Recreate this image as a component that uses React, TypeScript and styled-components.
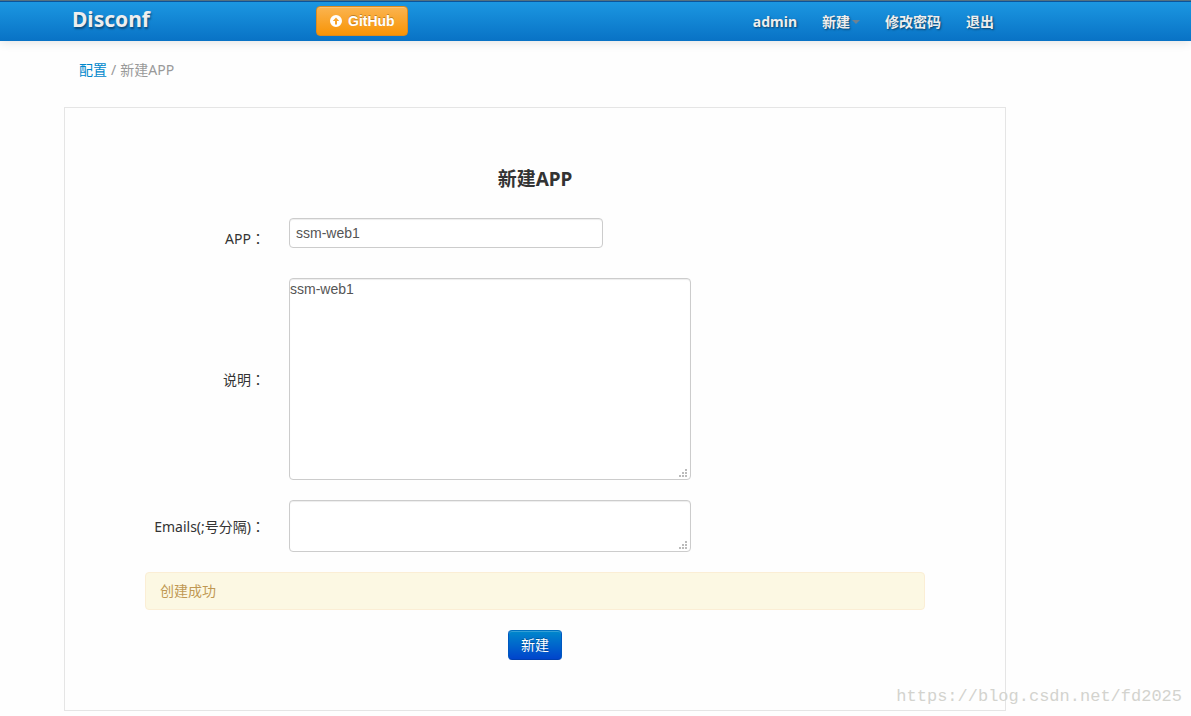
import React from "react";
import styled, { createGlobalStyle, css } from "styled-components";

const GlobalStyle = createGlobalStyle`
  *, *::before, *::after { box-sizing: border-box; }
  body {
    margin: 0;
    background: #fefefe;
    color: #333;
    font-family: "Noto Sans", "Noto Sans CJK SC", sans-serif;
    font-size: 14px;
    line-height: 20px;
  }
`;

const Page = styled.div`
  position: relative;
`;

const Navbar = styled.header`
  padding: 0 64px;
  border-top: 1px solid #56707f;
  background: linear-gradient(#1c98e2, #0872c5);
  box-shadow: inset 0 1px 0 #0b549b, 0 1px 10px rgba(0, 0, 0, 0.12);
`;

const NavInner = styled.div`
  display: flex;
  align-items: center;
  max-width: 942px;
  height: 40px;
  padding: 0 12px 0 8px;
`;

const BrandSlot = styled.div`
  flex: 0 0 244px;
  padding-bottom: 2px;
`;

const Brand = styled.a`
  color: #eee;
  font-size: 21px;
  font-weight: 700;
  text-decoration: none;
  text-shadow: 1px 2px 2px rgba(0, 0, 0, 0.4);
`;

const buttonBase = css`
  display: inline-flex;
  align-items: center;
  height: 30px;
  padding: 0 12px;
  border-radius: 4px;
  color: #fff;
  font-size: 14px;
  line-height: 20px;
  cursor: pointer;
`;

const GithubButton = styled.button`
  ${buttonBase}
  gap: 5px;
  border: 1px solid #dd8a1c;
  background: linear-gradient(#fbb450, #f89406);
  box-shadow: inset 0 1px 0 rgba(255, 255, 255, 0.2);
  font-family: "Liberation Sans", Arial, sans-serif;
  font-weight: 700;
  text-shadow: 0 -1px 0 rgba(0, 0, 0, 0.25);
`;

const SubmitButton = styled.button`
  ${buttonBase}
  border: 1px solid #0058b8;
  border-color: #0070c0 #0058c0 #003fb0;
  background: linear-gradient(#0088cc, #0044cc);
  box-shadow: inset 0 1px 0 rgba(255, 255, 255, 0.2);
  font-family: inherit;
  text-shadow: 0 -1px 0 rgba(0, 0, 0, 0.25);
`;

const NavMenu = styled.nav`
  display: flex;
  gap: 25px;
  margin-left: auto;
  padding-top: 2px;
`;

const NavLink = styled.a`
  display: flex;
  align-items: center;
  gap: 2px;
  color: #eee;
  font-weight: 700;
  text-decoration: none;
  white-space: nowrap;
  text-shadow: 1px 1px 2px rgba(0, 0, 0, 0.5);
`;

const Caret = styled.span`
  border: 4px solid transparent;
  border-top-color: #6f8291;
  border-bottom: 0;
`;

const Main = styled.main`
  padding: 0 64px;
`;

const Breadcrumb = styled.nav`
  display: flex;
  gap: 4px;
  padding: 19px 15px 27px;
  color: #999;

  a {
    color: #0088cc;
    text-decoration: none;
  }
`;

const Panel = styled.section`
  max-width: 942px;
  padding: 60px 80px 50px;
  border: 1px solid #e5e5e5;
`;

const Title = styled.h1`
  margin: 0 0 28px;
  font-size: 19px;
  line-height: 22px;
  text-align: center;
`;

const Form = styled.form`
  display: flex;
  flex-direction: column;
  gap: 20px;
`;

const Row = styled.div`
  display: grid;
  grid-template-columns: 120px minmax(0, 402px);
  align-items: center;
  column-gap: 24px;
`;

const Label = styled.label`
  text-align: right;
  white-space: nowrap;
`;

const Colon = styled.span`
  font-family: "Noto Sans CJK TC", sans-serif;
`;

const fieldBase = css`
  display: block;
  border: 1px solid #ccc;
  border-radius: 4px;
  outline: 0;
  background: #fff;
  box-shadow: inset 0 1px 1px rgba(0, 0, 0, 0.075);
  color: #555;
  font-family: "Liberation Sans", Arial, sans-serif;
  font-size: 14px;
  line-height: 20px;
`;

const TextInput = styled.input`
  ${fieldBase}
  width: 100%;
  max-width: 314px;
  height: 30px;
  margin-bottom: 10px;
  padding: 4px 6px;
`;

const TextArea = styled.textarea<{ $rows: "tall" | "short" }>`
  ${fieldBase}
  width: 100%;
  height: ${(p) => (p.$rows === "tall" ? 202 : 52)}px;
  padding: 0;
  resize: both;

  &::-webkit-resizer {
    background-image:
      linear-gradient(#bbb, #bbb), linear-gradient(#bbb, #bbb), linear-gradient(#bbb, #bbb),
      linear-gradient(#bbb, #bbb), linear-gradient(#bbb, #bbb), linear-gradient(#bbb, #bbb);
    background-size: 2px 2px;
    background-repeat: no-repeat;
    background-position: 10px 5px, 7px 8px, 10px 8px, 4px 11px, 7px 11px, 10px 11px;
  }
`;

const Alert = styled.div`
  padding: 8px 14px;
  border: 1px solid #fbeed5;
  border-radius: 4px;
  background: #fcf8e3;
  color: #c09853;
`;

const Actions = styled.div`
  display: flex;
  justify-content: center;
`;

const Watermark = styled.div`
  position: absolute;
  right: 9px;
  bottom: 4px;
  color: #d3d3ce;
  font-family: "Liberation Mono", monospace;
  font-size: 17px;
  line-height: 20px;
  pointer-events: none;
`;

function ArrowUpCircle() {
  return (
    <svg width="14" height="14" viewBox="0 0 14 14" aria-hidden="true">
      <path
        fill="#fff"
        fillRule="evenodd"
        d="M7 1a6 6 0 1 0 0 12A6 6 0 0 0 7 1ZM7 3.6 10.2 7H8v3.4H6V7H3.8Z"
      />
    </svg>
  );
}

export default function App() {
  return (
    <Page>
      <GlobalStyle />
      <Navbar>
        <NavInner>
          <BrandSlot>
            <Brand href="#">Disconf</Brand>
          </BrandSlot>
          <GithubButton type="button">
            <ArrowUpCircle />
            GitHub
          </GithubButton>
          <NavMenu>
            <NavLink href="#">admin</NavLink>
            <NavLink href="#">
              新建
              <Caret />
            </NavLink>
            <NavLink href="#">修改密码</NavLink>
            <NavLink href="#">退出</NavLink>
          </NavMenu>
        </NavInner>
      </Navbar>
      <Main>
        <Breadcrumb>
          <a href="#">配置</a>
          <span>/</span>
          <span>新建APP</span>
        </Breadcrumb>
        <Panel>
          <Title>新建APP</Title>
          <Form onSubmit={(e) => e.preventDefault()}>
            <Row>
              <Label htmlFor="app">
                APP<Colon>：</Colon>
              </Label>
              <TextInput id="app" type="text" defaultValue="ssm-web1" />
            </Row>
            <Row>
              <Label htmlFor="desc">
                说明<Colon>：</Colon>
              </Label>
              <TextArea id="desc" $rows="tall" defaultValue="ssm-web1" />
            </Row>
            <Row>
              <Label htmlFor="emails">
                Emails(;号分隔)<Colon>：</Colon>
              </Label>
              <TextArea id="emails" $rows="short" />
            </Row>
            <Alert role="status">创建成功</Alert>
            <Actions>
              <SubmitButton type="submit">新建</SubmitButton>
            </Actions>
          </Form>
        </Panel>
      </Main>
      <Watermark>https://blog.csdn.net/fd2025</Watermark>
    </Page>
  );
}
